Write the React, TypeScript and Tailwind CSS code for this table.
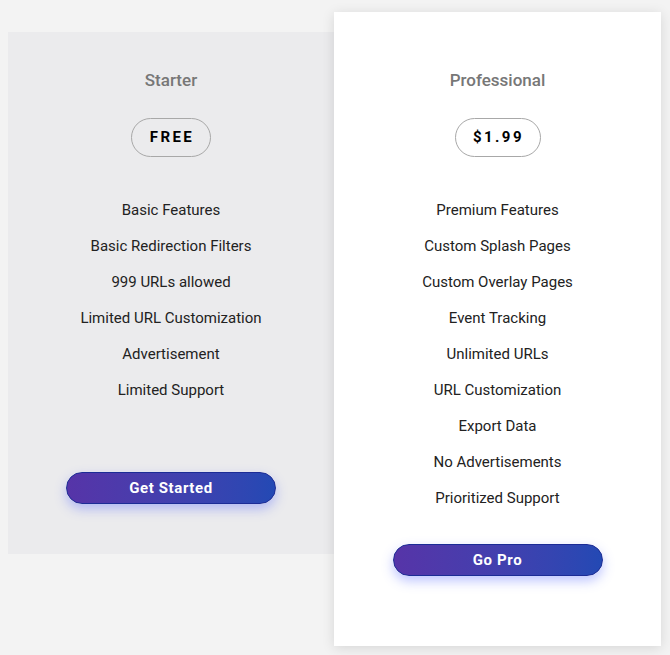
import React from "react";

const starter = [
  "Basic Features",
  "Basic Redirection Filters",
  "999 URLs allowed",
  "Limited URL Customization",
  "Advertisement",
  "Limited Support",
];

const pro = [
  "Premium Features",
  "Custom Splash Pages",
  "Custom Overlay Pages",
  "Event Tracking",
  "Unlimited URLs",
  "URL Customization",
  "Export Data",
  "No Advertisements",
  "Prioritized Support",
];

function Features({ items }: { items: string[] }) {
  return (
    <ul className="mt-[35px] flex flex-col">
      {items.map((t) => (
        <li key={t} className="h-[36px] flex items-center justify-center text-[15px] text-[#222222]">
          {t}
        </li>
      ))}
    </ul>
  );
}

function Btn({ label }: { label: string }) {
  return (
    <button className="w-[210px] h-[32px] rounded-full border border-[#1c2c96] bg-gradient-to-r from-[#5634a8] to-[#2349b4] text-white font-bold text-[15px] tracking-[0.04em] shadow-[0_5px_12px_rgba(70,90,255,0.35)]">
      {label}
    </button>
  );
}

export default function App() {
  return (
    <div
      className="min-h-[655px] w-[670px] bg-[#f3f3f3] flex items-start pl-[8px]"
      style={{ fontFamily: "Roboto, 'Liberation Sans', sans-serif" }}
    >
      <div className="mt-[32px] w-[326px] bg-[#ebebed] flex flex-col items-center pt-[36px] pb-[50px]">
        <h2 className="h-[24px] leading-[24px] text-[17px] font-medium text-[#777777]">Starter</h2>
        <div className="mt-[26px] w-[80px] h-[39px] rounded-full border border-[#a8a8a8] flex items-center justify-center text-[15px] font-bold tracking-[0.16em] pl-[2px] text-black">
          FREE
        </div>
        <Features items={starter} />
        <div className="mt-[64px]">
          <Btn label="Get Started" />
        </div>
      </div>
      <div className="mt-[12px] w-[327px] bg-white flex flex-col items-center pt-[56px] pb-[70px] shadow-[0_2px_12px_rgba(0,0,0,0.12)]">
        <h2 className="h-[24px] leading-[24px] text-[17px] font-medium text-[#777777]">Professional</h2>
        <div className="mt-[26px] w-[86px] h-[39px] rounded-full border border-[#a8a8a8] flex items-center justify-center text-[15px] font-bold tracking-[0.16em] pl-[2px] text-black">
          $1.99
        </div>
        <Features items={pro} />
        <div className="mt-[28px]">
          <Btn label="Go Pro" />
        </div>
      </div>
    </div>
  );
}
